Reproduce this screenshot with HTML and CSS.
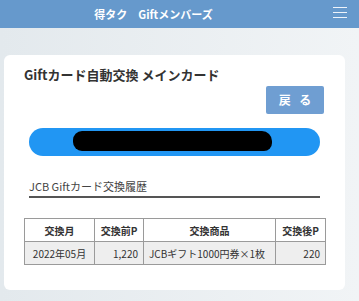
FILE: index.html
```html
<!DOCTYPE html>
<html lang="ja">
<head>
    <meta charset="UTF-8">
    <meta name="viewport" content="width=device-width, initial-scale=1.0">
    <title>Giftカード自動交換</title>
    <link rel="stylesheet" href="styles.css">
</head>
<body>
    <header class="site-header">
        <div class="site-title">得タク　Giftメンバーズ</div>
        <div class="menu-btn">
            <span></span><span></span><span></span>
        </div>
    </header>

    <div class="card">
        <h1>Giftカード自動交換 メインカード</h1>
        <div class="btn-row">
            <a class="back-btn" href="#">戻 る</a>
        </div>
        <div class="card-pill">
            <div class="masked"></div>
        </div>
        <h2 class="history-title">JCB Giftカード交換履歴</h2>
        <table class="history">
            <colgroup>
                <col class="c1">
                <col class="c2">
                <col class="c3">
                <col class="c4">
            </colgroup>
            <tr>
                <th>交換月</th>
                <th>交換前P</th>
                <th>交換商品</th>
                <th>交換後P</th>
            </tr>
            <tr>
                <td class="center">2022年05月</td>
                <td class="num">1,220</td>
                <td>JCBギフト1000円券×1枚</td>
                <td class="num">220</td>
            </tr>
        </table>
    </div>
</body>
</html>
```

FILE: styles.css
```css
body {
    margin: 0;
    font-family: "Noto Sans CJK JP", "Noto Sans", sans-serif;
    background: linear-gradient(to right, #e3e9ed, #f1f4f6);
    min-height: 301px;
    overflow: hidden;
}
.site-header {
    height: 28px;
    background-color: #6699cc;
    display: flex;
    align-items: center;
    justify-content: center;
    position: relative;
}
.site-title {
    color: #fff;
    font-weight: bold;
    font-size: 11px;
    margin-left: -52px;
}
.menu-btn {
    position: absolute;
    right: 12px;
    top: 7px;
    width: 14px;
    display: flex;
    flex-direction: column;
    gap: 4px;
}
.menu-btn span {
    display: block;
    height: 1px;
    background-color: #eef4fb;
}
.card {
    margin: 27px 14px 0 4px;
    padding: 13px 20px 25px 20px;
    background-color: #fff;
    border-radius: 6px;
}
h1 {
    margin: 0;
    font-size: 13px;
    line-height: 14px;
    font-weight: bold;
    color: #333;
}
.btn-row {
    display: flex;
    justify-content: flex-end;
    margin-top: 4px;
    padding-right: 1px;
}
.back-btn {
    width: 58px;
    height: 28px;
    line-height: 28px;
    text-align: center;
    background-color: #6f9ed2;
    color: #fff;
    font-weight: bold;
    font-size: 12px;
    word-spacing: 6px;
    text-decoration: none;
    border-radius: 2px;
}
.card-pill {
    margin: 14px 5px 0 5px;
    height: 28px;
    border-radius: 14px;
    background-color: #2196f3;
    padding: 3px 48px 0 44px;
    box-sizing: border-box;
}
.masked {
    height: 20px;
    background-color: #000;
    border-radius: 9px 10px 8px 9px;
}
.history-title {
    margin: 22px 5px 0 5px;
    font-size: 11px;
    line-height: 16px;
    font-weight: normal;
    color: #444;
    padding-bottom: 2px;
    border-bottom: 2px solid #555;
}
.history {
    margin-top: 20px;
    width: 301px;
    border-collapse: collapse;
    table-layout: fixed;
    font-size: 10px;
    color: #333;
}
.c1 { width: 70px; }
.c2 { width: 49px; }
.c3 { width: 132px; }
.c4 { width: 50px; }
.history th, .history td {
    border: 1px solid #9a9a9a;
    height: 22px;
    padding: 0 5px;
    white-space: nowrap;
}
.history th {
    background-color: #fff;
    font-weight: bold;
    text-align: center;
}
.history td {
    background-color: #eee;
}
.history td.center {
    text-align: center;
}
.history td.num {
    text-align: right;
}
```
